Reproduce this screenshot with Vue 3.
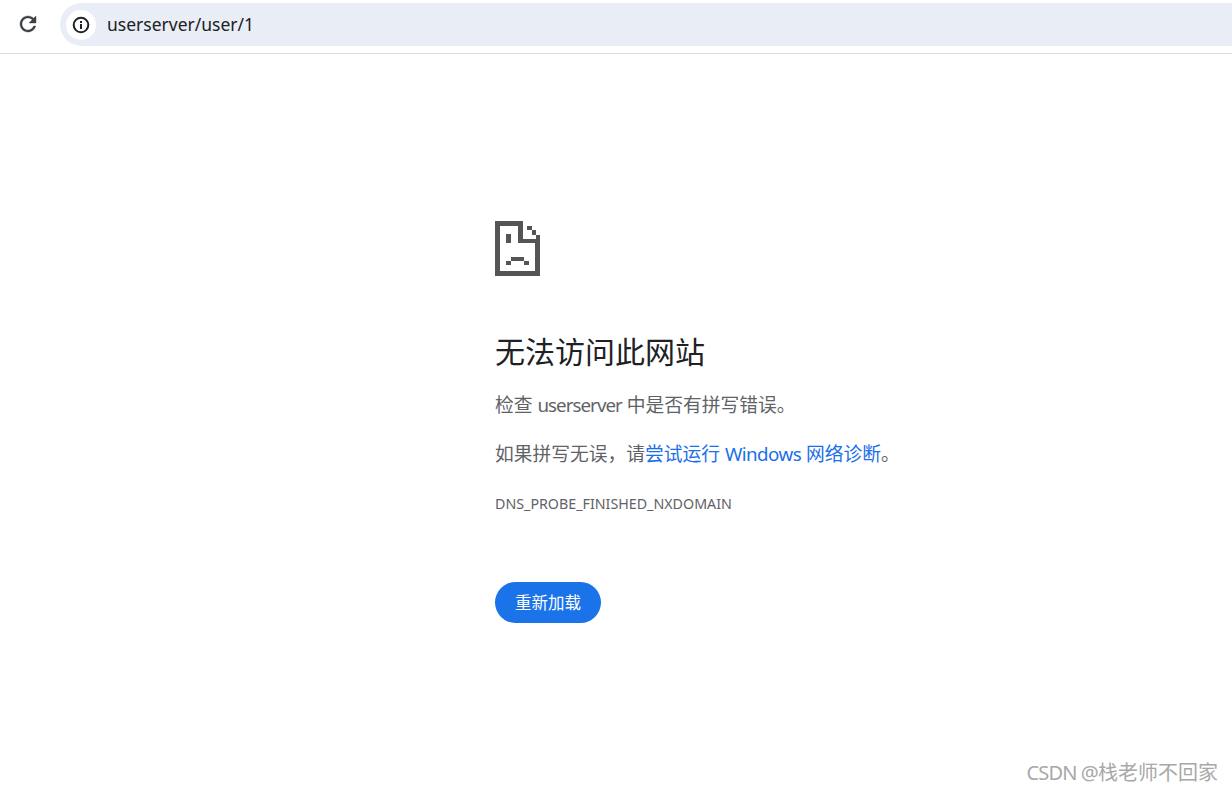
<template>
  <div class="page">
    <header class="toolbar">
      <button class="reload-btn" aria-label="reload">
        <svg width="24" height="24" viewBox="0 0 24 24">
          <path
            fill="#3c4043"
            stroke="#3c4043"
            stroke-width="0.4"
            d="M17.65 6.35C16.2 4.9 14.21 4 12 4c-4.42 0-7.99 3.58-7.99 8s3.57 8 7.99 8c3.73 0 6.84-2.55 7.73-6h-2.08c-.82 2.33-3.04 4-5.65 4-3.31 0-6-2.69-6-6s2.69-6 6-6c1.66 0 3.14.69 4.22 1.78L13 11h7V4l-2.35 2.35z"
          />
        </svg>
      </button>
      <div class="omnibox">
        <span class="site-info">
          <svg width="20" height="20" viewBox="0 0 20 20">
            <circle cx="10" cy="10" r="7.3" fill="none" stroke="#202124" stroke-width="2" />
            <rect x="9" y="9" width="2" height="5" fill="#202124" />
            <rect x="9" y="6" width="2" height="2" fill="#202124" />
          </svg>
        </span>
        <span class="url">userserver/user/1</span>
      </div>
    </header>

    <main class="error-page">
      <svg class="sad-icon" width="45" height="55" viewBox="0 0 45 55" shape-rendering="crispEdges">
        <rect v-for="(r, i) in iconRects" :key="i" :x="r[0]" :y="r[1]" :width="r[2]" :height="r[3]" fill="#555" />
      </svg>
      <h1 class="title">无法访问此网站</h1>
      <p class="line first">检查 <span class="host">userserver</span> 中是否有拼写错误。</p>
      <p class="line second">如果拼写无误，请<a class="link">尝试运行 <span class="win">Windows</span> 网络诊断</a>。</p>
      <div class="code">DNS_PROBE_FINISHED_NXDOMAIN</div>
      <button class="primary">重新加载</button>
    </main>

    <div class="watermark"><span class="wm-latin">CSDN @</span>栈老师不回家</div>
  </div>
</template>

<script setup>
// sad tab icon, one entry per block: x, y, w, h
const iconRects = [
  [0, 0, 5, 55],
  [0, 50, 45, 5],
  [40, 18, 5, 37],
  [0, 0, 28, 5],
  [23, 0, 5, 22],
  [23, 18, 22, 4],
  [32, 5, 5, 4],
  [37, 9, 4, 5],
  [41, 14, 4, 4],
  [11, 13, 5, 9],
  [16, 36, 13, 4],
  [11, 40, 5, 4],
  [29, 40, 5, 4],
];
</script>

<style>
html,
body {
  margin: 0;
  background: #fff;
}
</style>

<style scoped>
.page {
  position: relative;
  height: 791px;
  overflow: hidden;
  font-family: "Noto Sans", "Noto Sans CJK SC", sans-serif;
}

.toolbar {
  display: flex;
  align-items: flex-start;
  height: 54px;
  padding-top: 3px;
  box-sizing: border-box;
  border-bottom: 1px solid #dcdcdc;
}

.reload-btn {
  width: 60px;
  height: 41px;
  flex: none;
  padding: 0 4px 0 0;
  border: none;
  background: none;
  display: flex;
  align-items: center;
  justify-content: center;
}

.omnibox {
  flex: 1;
  height: 43px;
  display: flex;
  align-items: center;
  background: #e9edf6;
  border-radius: 22px 0 0 22px;
  padding-left: 6px;
}

.site-info {
  width: 30px;
  height: 30px;
  border-radius: 50%;
  background: #fff;
  display: flex;
  align-items: center;
  justify-content: center;
}

.url {
  margin: -2px 0 0 11px;
  font-size: 17.5px;
  color: #202124;
}

.error-page {
  display: flex;
  flex-direction: column;
  align-items: flex-start;
  padding: 167px 0 0 495px;
}

.sad-icon {
  display: block;
}

.title {
  margin: 55px 0 0;
  font-size: 30px;
  line-height: 42px;
  font-weight: 400;
  color: #202124;
}

.line {
  margin: 0;
  font-size: 18.75px;
  line-height: 28px;
  color: #5f6368;
}

.first {
  margin-top: 18px;
}

.second {
  margin-top: 21px;
}

.host {
  letter-spacing: -0.95px;
}

.win {
  letter-spacing: -0.55px;
}

.link {
  color: #1a6fe8;
}

.code {
  margin-top: 26px;
  font-size: 14.25px;
  line-height: 20px;
  color: #5f6368;
}

.primary {
  margin-top: 68px;
  width: 106px;
  height: 41px;
  border: none;
  border-radius: 21px;
  background: #1a73e8;
  color: #fff;
  font-family: inherit;
  font-size: 16.5px;
  padding: 0 0 2px;
}

.watermark {
  position: absolute;
  right: 14px;
  bottom: 4px;
  font-size: 20px;
  line-height: 28px;
  color: #a8a8a8;
}

.wm-latin {
  letter-spacing: -0.85px;
}
</style>
